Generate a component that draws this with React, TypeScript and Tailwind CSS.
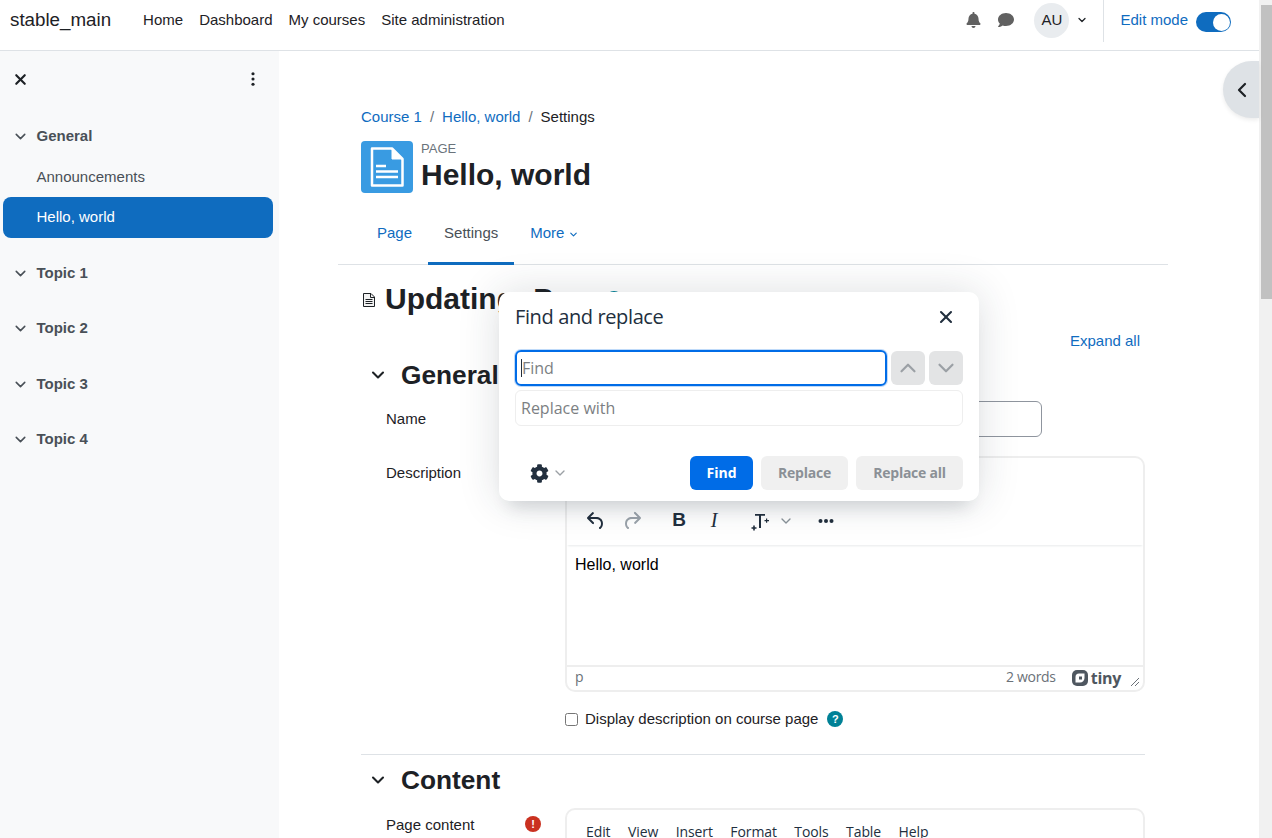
import { ChevronDown, ChevronLeft, ChevronUp, X } from "lucide-react"
import { FaBell, FaCog, FaComment } from "react-icons/fa"

const navLinks = ["Home", "Dashboard", "My courses", "Site administration"]
const topics = ["Topic 1", "Topic 2", "Topic 3", "Topic 4"]
const menus = ["Edit", "View", "Insert", "Format", "Tools", "Table", "Help"]

const arial = "font-['Liberation_Sans',Arial,sans-serif]"
const tiny = "font-['Open_Sans',sans-serif]"

function SectionTitle({ title }: { title: string }) {
  return (
    <div className="flex items-center h-8">
      <ChevronDown className="ml-[7px] w-[20px] h-[20px] text-[#1d2125]" strokeWidth={2.5} />
      <h3 className="ml-[13px] text-[26.25px] leading-8 font-bold text-[#1d2125]">{title}</h3>
    </div>
  )
}

function Menubar() {
  return (
    <div className={`flex h-[38px] pl-[19px] pt-[11px] gap-[17.5px] tracking-[-0.1px] text-[14px] leading-[22px] text-[#222f3e] ${tiny}`}>
      {menus.map((m) => (
        <span key={m}>{m}</span>
      ))}
    </div>
  )
}

function Toolbar() {
  return (
    <div className="flex items-center h-[49px] text-[#222f3e] shadow-[0_2px_2px_-1px_rgba(34,47,62,0.1)]">
      <svg viewBox="0 0 24 24" className="w-6 h-6 ml-[17px]" fill="currentColor">
        <path d="M6.4 8H12c3.7 0 6.2 2 6.8 5.1.6 2.7-.4 5.6-2.3 6.8a1 1 0 0 1-1-1.8c1.1-.6 1.8-2.7 1.4-4.6-.5-2.1-2.1-3.5-4.9-3.5H6.4l3.3 3.3a1 1 0 1 1-1.4 1.4l-5-5a1 1 0 0 1 0-1.4l5-5a1 1 0 0 1 1.4 1.4L6.4 8Z" />
      </svg>
      <svg viewBox="0 0 24 24" className="w-6 h-6 ml-[12px] text-[#9ba3ab]" fill="currentColor">
        <path d="M17.6 10H12c-2.8 0-4.4 1.4-4.9 3.5-.4 2 .3 4 1.4 4.6a1 1 0 1 1-1 1.8c-2-1.2-2.9-4.1-2.3-6.8.6-3 3-5.1 6.8-5.1h5.6l-3.3-3.3a1 1 0 1 1 1.4-1.4l5 5a1 1 0 0 1 0 1.4l-5 5a1 1 0 0 1-1.4-1.4l3.3-3.3Z" />
      </svg>
      <span className={`ml-[23px] w-6 text-center text-[19px] font-bold ${arial}`}>B</span>
      <span className="ml-[11px] w-6 text-center text-[20px] italic font-['Liberation_Serif',serif]">I</span>
      <svg viewBox="0 0 24 24" className="w-6 h-6 ml-[22px]" fill="currentColor">
        <path d="M7 5h10v1.800h-4V19h-2V6.800H7zM18 9.500h1.200V11H21v1.200h-1.800v1.500H18v-1.500h-1.500V11H18zM5.200 16.500h1.600v1.700h1.700v1.600H6.800v1.700H5.200v-1.700H3.500v-1.600h1.700z" />
      </svg>
      <ChevronDown className="w-[16px] h-[16px] ml-[6px] text-[#8a929a]" strokeWidth={2} />
      <svg viewBox="0 0 24 24" className="w-6 h-6 ml-[20px]" fill="currentColor">
        <circle cx="6.500" cy="12" r="2" />
        <circle cx="12" cy="12" r="2" />
        <circle cx="17.500" cy="12" r="2" />
      </svg>
    </div>
  )
}

function Editor() {
  return (
    <div className="border-2 border-[#eeeeee] rounded-[10px] h-[236px] flex flex-col overflow-hidden">
      <Menubar />
      <Toolbar />
      <div className="flex-1 px-[8px] pt-[8px] text-[16px] leading-[24px] text-[#000000]">Hello, world</div>
      <div className={`flex items-center h-[25px] pb-[2px] border-t-2 border-[#eeeeee] pl-[8px] text-[14px] text-[#6b7178] ${tiny}`}>
        <span>p</span>
        <span className="ml-auto mr-[1px] tracking-[-0.3px]">2 words</span>
        <svg viewBox="0 0 16 16" className="w-[16px] h-[16px] ml-[15px] text-[#4f5760]">
          <path fill="currentColor" d="M5 0h6a5 5 0 0 1 5 5v6a5 5 0 0 1-5 5H5a5 5 0 0 1-5-5V5a5 5 0 0 1 5-5z" />
          <path fill="#fff" d="M7 3.500h5.500V8A4.500 4.500 0 0 1 8 12.500H3.500V7A3.500 3.500 0 0 1 7 3.500z" />
          <path fill="currentColor" d="M7 6.500h3v3H7z" />
        </svg>
        <span className="ml-[3px] text-[16px] font-bold tracking-[-0.3px] text-[#4f5760] leading-none">tiny</span>
        <svg viewBox="0 0 10 10" className="w-[10px] h-[10px] ml-[9px] mr-[3px] mt-[8px] text-[#6b7178]" stroke="currentColor" strokeWidth="1" fill="none">
          <path d="M1 9 9 1M5 9l4-4" />
        </svg>
      </div>
    </div>
  )
}

function FindDialog() {
  return (
    <div className={`absolute left-[499px] top-[292px] w-[480px] h-[209px] bg-white rounded-[10px] shadow-[0_16px_16px_-10px_rgba(34,47,62,0.15),0_0_40px_1px_rgba(34,47,62,0.15)] px-[16px] ${tiny}`}>
      <div className="flex items-center justify-between h-[50px]">
        <h2 className="text-[20px] leading-[26px] tracking-[-0.38px] text-[#222f3e]">Find and replace</h2>
        <X className="w-[20px] h-[20px] mr-[7px] text-[#222f3e]" strokeWidth={2.5} />
      </div>
      <div className="flex items-center gap-[4px] mt-[8px]">
        <div className="relative flex-1">
          <input
            readOnly
            placeholder="Find"
            className="block w-full h-[36px] rounded-[6px] border-2 border-[#006ce7] shadow-[0_0_0_1px_rgba(0,108,231,0.25)] px-[5px] text-[16px] text-[#222f3e] placeholder:text-[#7c7f83] outline-none"
          />
          <div className="absolute left-[6px] top-[9px] w-px h-[18px] bg-[#222f3e]" />
        </div>
        <div className="flex items-center justify-center w-[34px] h-[34px] rounded-[6px] bg-[#e3e4e5]">
          <ChevronUp className="w-[26px] h-[26px] text-[#9ba0a5]" strokeWidth={2} />
        </div>
        <div className="flex items-center justify-center w-[34px] h-[34px] rounded-[6px] bg-[#e3e4e5]">
          <ChevronDown className="w-[26px] h-[26px] text-[#9ba0a5]" strokeWidth={2} />
        </div>
      </div>
      <input
        readOnly
        placeholder="Replace with"
        className="block w-full h-[36px] mt-[4px] rounded-[6px] border border-[#eeeeee] px-[5px] text-[16px] placeholder:text-[#7c7f83] outline-none"
      />
      <div className="flex items-center mt-[30px] h-[34px]">
        <FaCog className="ml-[15px] w-[19px] h-[19px] text-[#222f3e]" />
        <ChevronDown className="ml-[3px] w-[16px] h-[16px] text-[#9ba0a5]" strokeWidth={2} />
        <button className="ml-auto w-[63px] h-[34px] rounded-[6px] bg-[#006ce7] text-white text-[14px] font-bold">Find</button>
        <button className="ml-[8px] w-[87px] h-[34px] rounded-[6px] bg-[#f0f0f0] text-[#8b9096] text-[14px] font-bold tracking-[-0.2px]">Replace</button>
        <button className="ml-[8px] w-[107px] h-[34px] rounded-[6px] bg-[#f0f0f0] text-[#8b9096] text-[14px] font-bold tracking-[-0.25px]">Replace all</button>
      </div>
    </div>
  )
}

export default function App() {
  return (
    <div className={`relative flex h-screen overflow-hidden bg-white text-[15px] leading-[22.5px] text-[#1d2125] ${arial}`}>
      <div className="w-[1259px] flex flex-col shrink-0">
        {/* Navbar */}
        <header className="flex items-center shrink-0 h-[51px] pb-[10px] pl-[10px] border-b border-[#dee2e6]">
          <span className="text-[18.75px] mr-[32px]">stable_main</span>
          <nav className="flex gap-4">
            {navLinks.map((l) => (
              <a key={l}>{l}</a>
            ))}
          </nav>
          <div className="ml-auto flex items-center">
            <FaBell className="w-[15px] h-[16px] text-[#616161]" />
            <FaComment className="ml-[16px] w-[18px] h-[16px] text-[#616161]" />
            <div className="ml-[19px] flex items-center justify-center w-[35px] h-[35px] rounded-full bg-[#e9ecef]">AU</div>
            <ChevronDown className="ml-[7px] w-[12px] h-[12px]" strokeWidth={2.5} />
            <div className="ml-[15px] w-px h-[43px] bg-[#dee2e6] self-start" />
            <span className="ml-[16px] text-[#0f6cbf]">Edit mode</span>
            <div className="ml-[8px] mr-[28px] mt-[4px] flex items-center justify-end w-[35px] h-[20px] rounded-full bg-[#0f6cbf] pr-[1px]">
              <div className="w-[17px] h-[17px] rounded-full bg-white" />
            </div>
          </div>
        </header>

        <div className="flex flex-1 min-h-0">
          {/* Course index */}
          <aside className="w-[279px] shrink-0 bg-[#f8f9fa] text-[#495057]">
            <div className="flex items-center justify-between h-[56px] pl-[12px] pr-[24px] text-[#1d2125]">
              <X className="w-[17px] h-[17px]" strokeWidth={3} />
              <svg viewBox="0 0 4 16" className="w-[4px] h-[14px]" fill="currentColor">
                <circle cx="2" cy="2" r="1.800" />
                <circle cx="2" cy="8" r="1.800" />
                <circle cx="2" cy="14" r="1.800" />
              </svg>
            </div>
            <div className="flex items-center mt-[18px] h-[23px] pl-[12px] font-bold">
              <ChevronDown className="w-[17px] h-[17px]" strokeWidth={2.2} />
              <span className="ml-[7.5px]">General</span>
            </div>
            <div className="mt-[18px] h-[23px] pl-[36.5px]">Announcements</div>
            <div className="mt-[8px] mx-[3px] w-[270px] h-[41px] rounded-lg bg-[#0f6cbf] text-white pl-[33.5px] flex items-center">Hello, world</div>
            <div className="mt-[23.500px] flex flex-col gap-[32.500px]">
              {topics.map((t) => (
                <div key={t} className="flex items-center h-[23px] pl-[12px] font-bold">
                  <ChevronDown className="w-[17px] h-[17px]" strokeWidth={2.2} />
                  <span className="ml-[7.5px]">{t}</span>
                </div>
              ))}
            </div>
          </aside>

          {/* Main content */}
          <main className="flex-1 min-w-0 pl-[59px] pt-[55px]">
            <div className="w-[830px]">
              <div className="pl-[23px] flex h-[22.500px]">
                <a className="text-[#0f6cbf]">Course 1</a>
                <span className="mx-[8px] text-[#6a737b]">/</span>
                <a className="text-[#0f6cbf]">Hello, world</a>
                <span className="mx-[8px] text-[#6a737b]">/</span>
                <span>Settings</span>
              </div>
              <div className="flex ml-[23px] mt-[12.500px] h-[52px]">
                <div className="flex items-center justify-center w-[52px] h-[52px] rounded-[4px] bg-[#399be2]">
                  <svg viewBox="0 0 34 40" className="w-[34px] h-[40px]" fill="none" stroke="#fff">
                    <path d="M2 1.500h20L32.500 12v26.500H2z" strokeWidth="2.500" strokeLinejoin="round" />
                    <path d="M22 1.500V12h10.500z" fill="#fff" strokeWidth="1" />
                    <path d="M6 19h10M6 24.500h22M6 30h22" strokeWidth="2.500" />
                  </svg>
                </div>
                <div className="ml-[8px]">
                  <div className="text-[13px] leading-[15px] text-[#6a737b]">PAGE</div>
                  <h1 className="text-[30px] leading-[36px] mt-[1px] font-bold text-[#1d2125]">Hello, world</h1>
                </div>
              </div>
              <div className="flex mt-[8px] h-[64px] pl-[23px] border-b border-[#dee2e6]">
                <a className="h-[64px] pt-[21px] px-[16px] text-[#0f6cbf]">Page</a>
                <a className="h-[64px] pt-[21px] px-[16px] border-b-[3px] border-[#0f6cbf] text-[#495057]">Settings</a>
                <a className="h-[64px] pt-[21px] px-[16px] flex items-start text-[#0f6cbf]">
                  More
                  <ChevronDown className="ml-[4px] mt-[7px] w-[11px] h-[11px]" strokeWidth={2.5} />
                </a>
              </div>
            </div>

            <div className="ml-[23px] w-[784px]">
              <div className="flex items-center mt-[16px] h-[36px]">
                <svg viewBox="0 0 16 16" className="w-[16px] h-[16px] mt-[2px]" fill="none" stroke="#1d2125" strokeWidth="1">
                  <path d="M2.500 1.500h7.500l3.500 3.500v9.500h-11z" fill="#f2f2f2" />
                  <path d="M4.500 7.500h7M4.500 9.500h7M4.500 11.500h7M9.500 1.500v4h4" />
                </svg>
                <h2 className="ml-[8px] text-[30px] leading-[36px] font-bold">Updating: Page</h2>
                <div className="ml-[1px] mb-[1px] w-[16px] h-[16px] rounded-full bg-[#008196]" />
              </div>
              <div className="mt-[12.500px] pr-[5px] text-right text-[#0f6cbf]">Expand all</div>
              <div className="mt-[7px]">
                <SectionTitle title="General" />
              </div>
              <div className="grid grid-cols-[204px_1fr] mt-[10px]">
                <div className="pl-[25px] pt-[7px]">Name</div>
                <div className="w-[477px] h-[36px] border border-[#8f959e] rounded-[6px]" />
              </div>
              <div className="grid grid-cols-[204px_1fr] mt-[19px]">
                <div className="pl-[25px] pt-[6px]">Description</div>
                <Editor />
              </div>
              <div className="flex items-center mt-[16px] pl-[204px]">
                <input type="checkbox" readOnly className="w-[13px] h-[13px]" />
                <span className="ml-[7px]">Display description on course page</span>
                <span className="ml-[9px] flex items-center justify-center w-[16px] h-[16px] rounded-full bg-[#008196] text-white text-[11px] font-bold">?</span>
              </div>
              <div className="mt-[23.500px] border-t border-[#dee2e6]" />
              <div className="mt-[9px]">
                <SectionTitle title="Content" />
              </div>
              <div className="grid grid-cols-[204px_1fr] mt-[12px]">
                <div className="flex items-start justify-between pl-[25px] pr-[24px] pt-[6px]">
                  <span>Page content</span>
                  <span className="mt-[2px] flex items-center justify-center w-[16px] h-[16px] rounded-full bg-[#ca3120] text-white text-[11px] font-bold">!</span>
                </div>
                <Editor />
              </div>
            </div>
          </main>
        </div>
      </div>

      {/* Scrollbar */}
      <div className="w-[13px] shrink-0 bg-[#f1f1f1] pl-[2px] pt-[5px]">
        <div className="w-[11px] h-[294px] bg-[#c1c1c1]" />
      </div>

      {/* Right drawer toggle */}
      <div className="absolute left-[1223px] top-[61px] w-[36px] h-[57px] rounded-l-full bg-[#dee2e6] flex items-center justify-center pl-[2px] shadow-[0_2px_4px_rgba(0,0,0,0.08)]">
        <ChevronLeft className="w-[24px] h-[24px] text-[#1d2125]" strokeWidth={2.2} />
      </div>

      <FindDialog />
    </div>
  )
}
